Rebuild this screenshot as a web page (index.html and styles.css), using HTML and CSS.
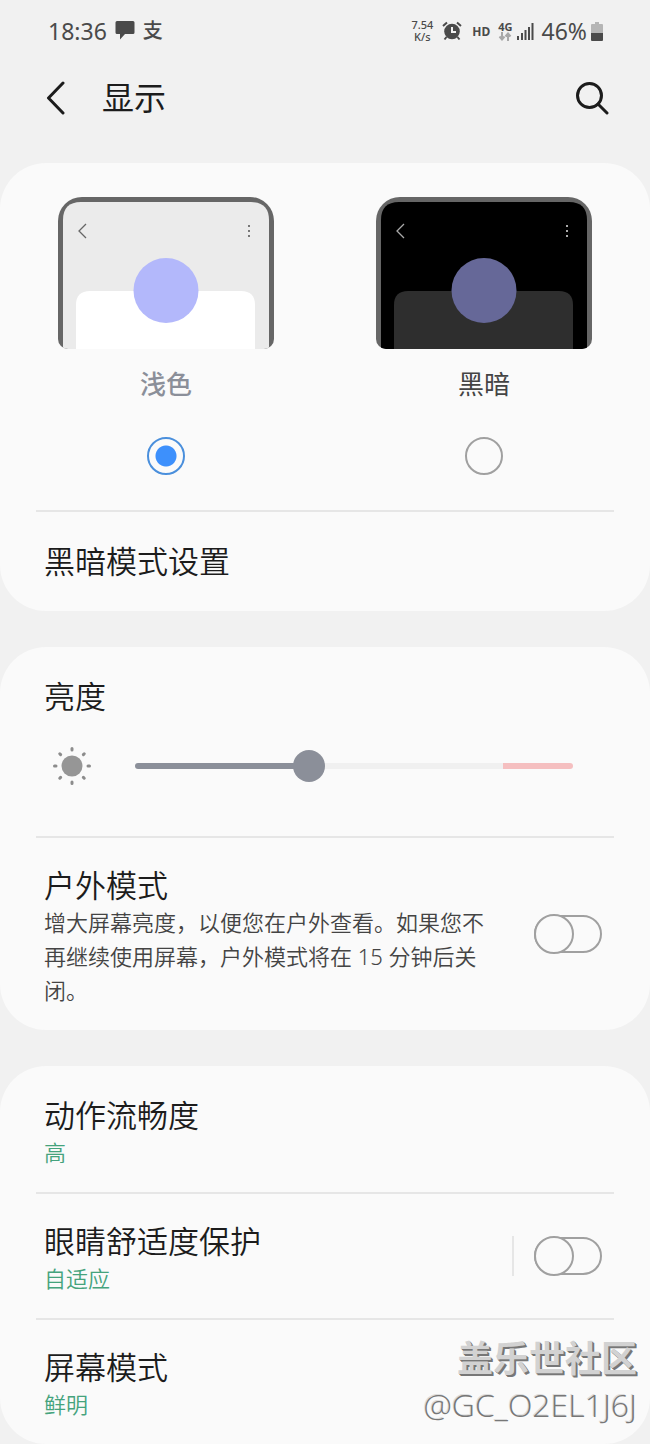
FILE: index.html
```html
<!DOCTYPE html>
<html lang="zh-CN">
<head>
    <meta charset="UTF-8">
    <meta name="viewport" content="width=device-width, initial-scale=1">
    <title>显示</title>
    <link rel="stylesheet" href="styles.css">
</head>

<body>
    <div class="status">
        <span class="clock">18:36</span>
        <svg class="bubble" width="20" height="20" viewBox="0 0 20 20">
            <path d="M2 0h16a1.500 1.500 0 0 1 1.500 1.500v10a1.500 1.500 0 0 1-1.500 1.500H10l-5 5.500v-5.500H2a1.500 1.500 0 0 1-1.500-1.500v-10A1.500 1.500 0 0 1 2 0z" />
        </svg>
        <span class="pay">支</span>

        <div class="status-right">
            <span class="speed">7.54<br>K/s</span>
            <svg class="alarm" width="20" height="20" viewBox="0 0 20 20">
                <circle cx="10" cy="10.500" r="7.800" />
                <path class="line" d="M1 5l4-3.500M19 5l-4-3.500M4.500 16l-2 2.500M15.500 16l2 2.500" />
                <path class="hand" d="M10 6v5h4" />
            </svg>
            <span class="hd">HD</span>
            <span class="net">4G
                <svg width="14" height="9" viewBox="0 0 14 9">
                    <path d="M4 0v7M1.500 4.500L4 7.500l2.500-3M10 9V2M7.500 4.500L10 1.500l2.500 3" />
                </svg>
            </span>
            <svg class="signal" width="17" height="18" viewBox="0 0 17 18">
                <path d="M0 14h2v4H0zM4 11h2v7H4zM7.500 8h2v10h-2zM11 5h2v13h-2zM14.500 1h2v17h-2z" />
            </svg>
            <span class="clock">46%</span>
            <svg class="battery" width="12" height="19" viewBox="0 0 12 19">
                <path class="empty" d="M4 0h4v2h3a1 1 0 0 1 1 1v8H0V3a1 1 0 0 1 1-1h3z" />
                <path d="M0 11h12v7a1 1 0 0 1-1 1H1a1 1 0 0 1-1-1z" />
            </svg>
        </div>
    </div>

    <header class="header">
        <button class="icon-btn" aria-label="返回">
            <svg width="20" height="34" viewBox="0 0 20 34"><path d="M17 2L2.500 17 17 32" /></svg>
        </button>
        <h1>显示</h1>
        <button class="icon-btn search" aria-label="搜索">
            <svg width="34" height="34" viewBox="0 0 34 34"><circle cx="14.500" cy="14.500" r="12" /><path d="M23 23l9 9" /></svg>
        </button>
    </header>

    <section class="card">
        <div class="themes">
            <label class="theme light">
                <svg class="preview" width="216" height="152" viewBox="0 0 216 152">
                    <rect class="frame" width="216" height="152" />
                    <path class="screen" d="M5 152V23Q5 5 23 5H193Q211 5 211 23V152z" />
                    <path class="panel" d="M18 152V108Q18 94 32 94H183Q197 94 197 108V152z" />
                    <circle class="ball" cx="108" cy="93.500" r="32.500" />
                    <path class="mark" d="M28 27l-7 7 7 7" />
                    <path class="dots" d="M190 28h2v2h-2zM190 33h2v2h-2zM190 38h2v2h-2z" />
                </svg>
                <span>浅色</span>
                <input type="radio" name="theme" checked>
            </label>
            <label class="theme dark">
                <svg class="preview" width="216" height="152" viewBox="0 0 216 152">
                    <rect class="frame" width="216" height="152" />
                    <path class="screen" d="M5 152V23Q5 5 23 5H193Q211 5 211 23V152z" />
                    <path class="panel" d="M18 152V108Q18 94 32 94H183Q197 94 197 108V152z" />
                    <circle class="ball" cx="108" cy="93.500" r="32.500" />
                    <path class="mark" d="M28 27l-7 7 7 7" />
                    <path class="dots" d="M190 28h2v2h-2zM190 33h2v2h-2zM190 38h2v2h-2z" />
                </svg>
                <span>黑暗</span>
                <input type="radio" name="theme">
            </label>
        </div>
        <hr>
        <a class="row single" href="#dark"><span class="title">黑暗模式设置</span></a>
    </section>

    <section class="card">
        <div class="brightness">
            <label class="title" for="bright">亮度</label>
            <div class="slider">
                <svg width="38" height="38" viewBox="0 0 38 38">
                    <circle cx="19" cy="19" r="10.500" />
                    <path d="M19 1.500v1.500M19 35v1.500M1.500 19H3M35 19h1.500M6.800 6.800l.8.800M30.400 30.400l.8.800M31.200 6.800l-.8.800M7.600 30.400l-.8.800" />
                </svg>
                <input id="bright" type="range" min="0" max="100" value="39">
            </div>
        </div>
        <hr>
        <div class="row">
            <label class="text" for="outdoor">
                <span class="title">户外模式</span>
                <span class="desc">增大屏幕亮度，以便您在户外查看。如果您不再继续使用屏幕，户外模式将在 15 分钟后关闭。</span>
            </label>
            <input id="outdoor" class="toggle" type="checkbox">
        </div>
    </section>

    <section class="card">
        <a class="row" href="#motion">
            <span class="text">
                <span class="title">动作流畅度</span>
                <span class="value">高</span>
            </span>
        </a>
        <hr>
        <div class="row">
            <label class="text" for="eye">
                <span class="title">眼睛舒适度保护</span>
                <span class="value">自适应</span>
            </label>
            <span class="split"></span>
            <input id="eye" class="toggle" type="checkbox">
        </div>
        <hr>
        <a class="row" href="#screen">
            <span class="text">
                <span class="title">屏幕模式</span>
                <span class="value">鲜明</span>
            </span>
        </a>
        <div class="watermark">
            <b>盖乐世社区</b>
            <span>@GC_O2EL1J6J</span>
        </div>
    </section>
</body>
</html>
```
FILE: styles.css
```css
* {
    box-sizing: border-box;
}

body {
    margin: 0;
    background: #f1f1f1;
    color: #1c1c1c;
    font-family: "Noto Sans", "Noto Sans CJK SC", sans-serif;
}

/* status bar */
.status {
    display: flex;
    align-items: center;
    height: 62px;
    padding: 0 47px 0 48px;
    color: #4a4a4a;
    fill: #4a4a4a;
}

.clock {
    font-size: 23px;
    line-height: 30px;
}

.bubble {
    margin: 0 8px;
}

.pay {
    font-size: 20px;
    line-height: 24px;
    font-weight: 500;
}

.status-right {
    display: flex;
    align-items: center;
    margin-left: auto;
}

.speed {
    font-size: 11px;
    line-height: 12px;
    font-weight: 500;
    text-align: center;
    margin-right: 9px;
}

.alarm .line,
.alarm .hand {
    fill: none;
    stroke: #4a4a4a;
    stroke-width: 2;
}

.alarm .hand {
    stroke: #f1f1f1;
}

.hd {
    font-size: 12px;
    font-weight: bold;
    margin: 0 8px 0 10px;
}

.net {
    display: flex;
    flex-direction: column;
    font-size: 11px;
    line-height: 11px;
    font-weight: bold;
    margin-right: 4px;
}

.net svg {
    fill: none;
    stroke: #a8a8a8;
    stroke-width: 2;
}

.signal {
    margin-right: 8px;
}

.battery {
    margin-left: 4px;
}

.battery .empty {
    fill: #b5b5b5;
}

/* title bar */
.header {
    display: flex;
    align-items: center;
    height: 72px;
    margin-bottom: 29px;
    padding: 0 41px 0 46px;
}

.header h1 {
    margin: 0 0 0 36px;
    font-size: 32px;
    line-height: 40px;
    font-weight: normal;
}

.icon-btn {
    display: flex;
    padding: 0;
    border: none;
    background: none;
    cursor: pointer;
}

.icon-btn svg {
    fill: none;
    stroke: #1c1c1c;
    stroke-width: 3;
    stroke-linecap: round;
    stroke-linejoin: round;
}

.search {
    margin-left: auto;
}

/* cards */
.card {
    position: relative;
    margin-bottom: 36px;
    padding-top: 2px;
    border-radius: 46px;
    background: #fafafa;
}

.card:last-child {
    margin-bottom: 0;
}

hr {
    height: 2px;
    margin: 0 36px;
    border: none;
    background: #e6e6e6;
}

.row {
    display: flex;
    align-items: center;
    padding: 27px 48px 23px 44px;
    color: inherit;
    text-decoration: none;
}

.single {
    padding-top: 29px;
    padding-bottom: 30px;
}

.text {
    flex: 1;
}

.title {
    display: block;
    font-size: 31px;
    line-height: 40px;
    font-weight: 350;
}

.desc,
.value {
    display: block;
    font-size: 22px;
    line-height: 34px;
    font-weight: 350;
    color: #444;
}

.value {
    color: #45a37d;
}

/* light / dark */
.themes {
    display: grid;
    grid-template-columns: 1fr 1fr;
    padding: 32px 7px 35px;
}

.theme {
    display: flex;
    flex-direction: column;
    align-items: center;
    font-size: 26px;
    line-height: 36px;
    color: #444;
}

.theme span {
    margin: 17px 0 35px;
}

.light span {
    font-weight: 500;
    color: #8b8f99;
}

.preview {
    border-radius: 24px 24px 10px 10px;
}

.frame {
    fill: #666;
}

.light .screen {
    fill: #ebebeb;
}

.light .panel {
    fill: #fff;
}

.light .ball {
    fill: #b3b8fb;
}

.dark .screen {
    fill: #000;
}

.dark .panel {
    fill: #2e2e2e;
}

.dark .ball {
    fill: #666898;
}

.mark {
    fill: none;
    stroke: #666;
    stroke-width: 1.3;
}

.dots {
    fill: #777;
}

.dark .mark {
    stroke: #aaa;
}

.dark .dots {
    fill: #aaa;
}

input {
    appearance: none;
    margin: 0;
    cursor: pointer;
}

.theme input {
    width: 38px;
    height: 38px;
    border: 2px solid #a0a0a0;
    border-radius: 50%;
}

.theme input:checked {
    border-color: #4a8fdc;
    background: radial-gradient(circle, #3d90fc 10px, transparent 11px);
}

/* brightness */
.brightness {
    padding: 27px 77px 51px 44px;
}

.slider {
    display: flex;
    align-items: center;
    gap: 44px;
    margin-top: 31px;
    padding-left: 9px;
}

.slider svg {
    flex: none;
    fill: #969696;
}

.slider path {
    stroke: #8c8c8c;
    stroke-width: 3;
    stroke-linecap: round;
}

.slider input {
    flex: 1;
    min-width: 0;
    height: 32px;
    background: none;
}

.slider input::-webkit-slider-runnable-track {
    height: 6px;
    border-radius: 3px;
    background: linear-gradient(to right, #8b8f99 40%, #f0f0f0 40%, #f0f0f0 84%, #f5bfc0 84%);
}

.slider input::-webkit-slider-thumb {
    appearance: none;
    width: 32px;
    height: 32px;
    margin-top: -13px;
    border-radius: 50%;
    background: #8b8f99;
}

/* switches */
.toggle {
    position: relative;
    flex: none;
    width: 68px;
    height: 38px;
    margin: 0 0 4px 40px;
    border: 2px solid #a0a0a0;
    border-radius: 19px;
}

.toggle::before {
    content: "";
    box-sizing: border-box;
    position: absolute;
    top: -3px;
    left: -2px;
    width: 40px;
    height: 40px;
    border: 2px solid #a0a0a0;
    border-radius: 50%;
    background: #fafafa;
}

.toggle:checked::before {
    left: 26px;
}

.split {
    width: 2px;
    height: 40px;
    margin-bottom: 4px;
    background: #e6e6e6;
}

.split + .toggle {
    margin-left: 20px;
}

.watermark {
    position: absolute;
    right: 13px;
    bottom: 16px;
    text-align: right;
    color: #d2d2d2;
    pointer-events: none;
}

.watermark b {
    display: block;
    font-size: 36px;
    line-height: 46px;
    text-shadow: 1px 1px 0 #777, 2px 2px 0 #777;
}

.watermark span {
    display: block;
    font-family: "Open Sans", sans-serif;
    font-size: 32px;
    line-height: 46px;
    font-weight: 300;
    color: #777;
    text-shadow: -1px -1px 0 #ddd;
}
```
